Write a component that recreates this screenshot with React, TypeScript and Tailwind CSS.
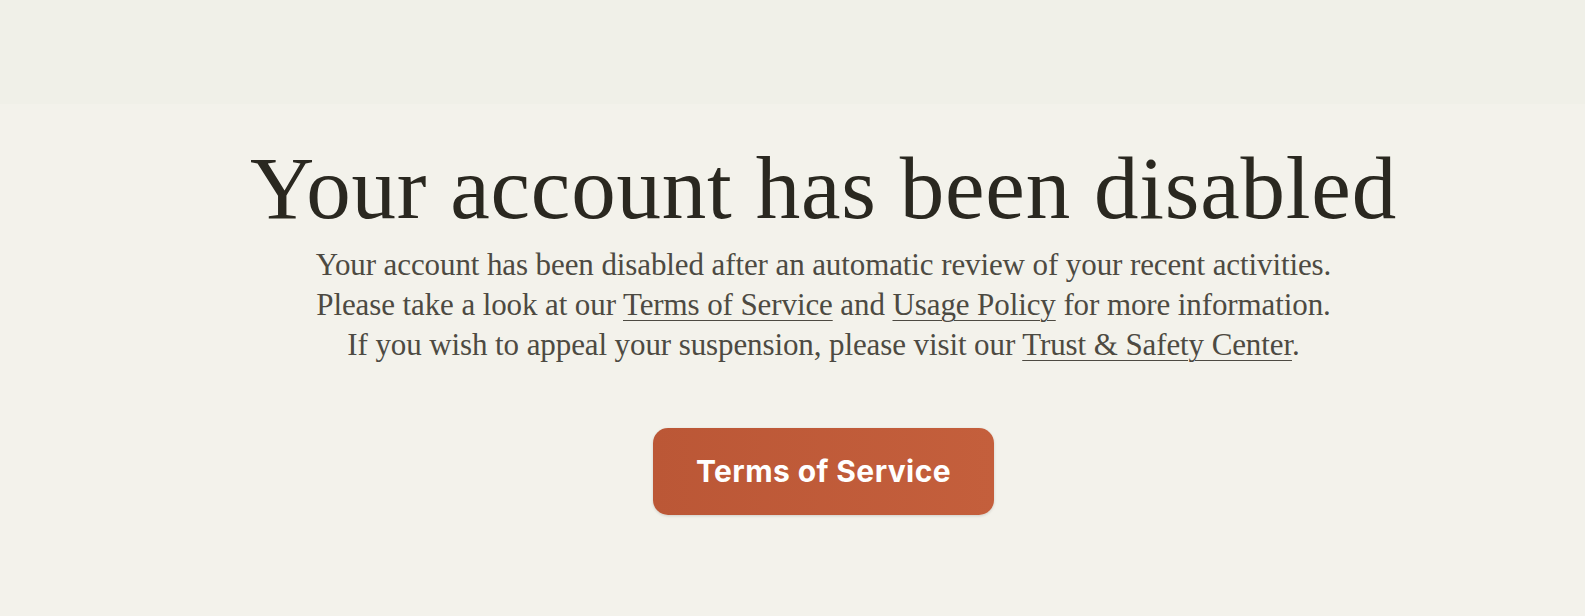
import React from 'react';

const serif = { fontFamily: '"Liberation Serif", "DejaVu Serif", serif' };

export default function App() {
  return (
    <div className="min-h-[616px] bg-[#f3f2eb]">
      <header className="h-[104px] bg-[#f0f0e8]" />
      <main className="flex flex-col items-center pl-[62px] pt-[40px]">
        <h1
          className="text-[89px] leading-[89px] tracking-[0.8px] text-[#2a2820]"
          style={serif}
        >
          Your account has been disabled
        </h1>
        <div
          className="mt-[12px] text-center text-[31px] leading-[40px] tracking-[-0.1px] text-[#4d4a42]"
          style={serif}
        >
          <p>Your account has been disabled after an automatic review of your recent activities.</p>
          <p>
            Please take a look at our{' '}
            <a href="#" className="underline underline-offset-[5px] decoration-1">Terms of Service</a> and{' '}
            <a href="#" className="underline underline-offset-[5px] decoration-1">Usage Policy</a> for more information.
          </p>
          <p>
            If you wish to appeal your suspension, please visit our{' '}
            <a href="#" className="underline underline-offset-[5px] decoration-1">Trust &amp; Safety Center</a>.
          </p>
        </div>
        <button
          type="button"
          className="mt-[63px] flex h-[87px] w-[341px] items-center justify-center rounded-[15px] bg-gradient-to-r from-[#bb5736] to-[#c45f3c] text-[30px] font-bold tracking-[0.4px] text-white shadow-[0_1px_3px_rgba(0,0,0,0.15)]"
          style={{ fontFamily: 'Inter, "Liberation Sans", sans-serif' }}
        >
          Terms of Service
        </button>
      </main>
    </div>
  );
}
